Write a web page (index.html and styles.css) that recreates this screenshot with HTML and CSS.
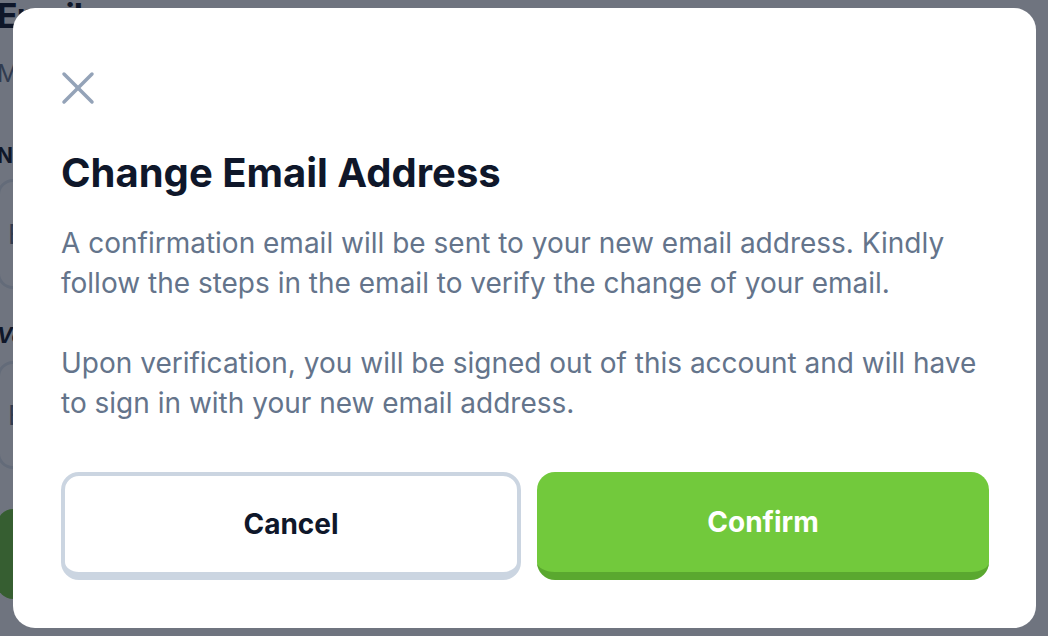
FILE: index.html
```html
<!DOCTYPE html>
<html lang="en">
<head>
<meta charset="utf-8">
<title>Change Email Address</title>
<link rel="stylesheet" href="styles.css">
</head>
<body>
<div class="page">
  <h1 class="page-title">Email</h1>
  <p class="page-sub">Manage your email address</p>
  <label class="page-label">New Email</label>
  <div class="page-input">Enter new email</div>
  <label class="page-label page-label-2">Verify Email</label>
  <div class="page-input page-input-2">Enter email again</div>
  <div class="page-button">Save</div>
</div>

<div class="overlay">
  <div class="modal" role="dialog" aria-labelledby="modal-title">
    <button class="close" aria-label="Close">
      <svg width="34" height="34" viewBox="0 0 34 34" fill="none" stroke="#94a3b8" stroke-width="3.5" stroke-linecap="round">
        <line x1="3" y1="3" x2="31" y2="31"/>
        <line x1="31" y1="3" x2="3" y2="31"/>
      </svg>
    </button>
    <h2 class="modal-title" id="modal-title">Change Email Address</h2>
    <div class="modal-body">
      <p>A confirmation email will be sent to your new email address. Kindly follow the steps in the email to verify the change of your email.</p>
      <p>Upon verification, you will be signed out of this account and will have to sign in with your new email address.</p>
    </div>
    <div class="actions">
      <button class="btn btn-cancel">Cancel</button>
      <button class="btn btn-confirm">Confirm</button>
    </div>
  </div>
</div>
</body>
</html>
```

FILE: styles.css
```css
* { box-sizing: border-box; }

html, body {
  margin: 0;
  padding: 0;
  height: 100%;
  overflow: hidden;
  background: #ffffff;
  font-family: "Inter", "Noto Sans", "Liberation Sans", sans-serif;
}

/* background page (under the overlay) */
.page {
  display: flex;
  flex-direction: column;
  margin-left: -3px;
  width: 700px;
}
.page-title {
  margin: -4px 0 0 0;
  font-size: 34px;
  font-weight: 700;
  line-height: 40px;
  letter-spacing: -1px;
  color: #0f172a;
}
.page-sub {
  margin: 22px 0 0 0;
  font-size: 24px;
  line-height: 32px;
  color: #64748b;
}
.page-label {
  margin-top: 52px;
  font-size: 21px;
  font-weight: 700;
  line-height: 28px;
  color: #0f172a;
}
.page-label-2 {
  margin-top: 33px;
  font-style: italic;
}
.page-input {
  margin-top: 9px;
  height: 110px;
  border: 3px solid #e2e8f0;
  border-radius: 16px;
  padding: 0 8px;
  display: flex;
  align-items: center;
  font-size: 27px;
  color: #64748b;
}
.page-input-2 {
  margin-top: 11px;
  height: 108px;
}
.page-button {
  margin-top: 40px;
  height: 90px;
  border-radius: 16px;
  background: #72c93c;
  color: #fff;
  display: flex;
  align-items: center;
  justify-content: center;
  font-size: 24px;
  font-weight: 700;
}

/* overlay + modal */
.overlay {
  position: fixed;
  inset: 0;
  background: rgba(15, 23, 42, 0.6);
  display: flex;
  padding: 8px 12px 8px 13px;
}
.modal {
  flex: 1;
  background: #ffffff;
  border-radius: 22px;
  padding: 63px 47px 48px 48px;
  display: flex;
  flex-direction: column;
}
.close {
  align-self: flex-start;
  background: none;
  border: 0;
  padding: 0;
  margin: 0;
  width: 34px;
  height: 34px;
  cursor: pointer;
  display: block;
}
.close svg { display: block; }

.modal-title {
  margin: 44px 0 0 0;
  font-size: 40px;
  font-weight: 700;
  line-height: 48px;
  color: #0f172a;
}
.modal-body {
  margin-top: 26px;
}
.modal-body p {
  margin: 0;
  font-size: 28px;
  line-height: 40px;
  color: #64748b;
}
.modal-body p + p { margin-top: 40px; }

.actions {
  margin-top: 49px;
  display: flex;
  gap: 16px;
}
.btn {
  flex: 1;
  height: 108px;
  border-radius: 18px;
  font-family: inherit;
  font-size: 28px;
  font-weight: 700;
  cursor: pointer;
  padding: 0;
}
.btn-cancel {
  background: #ffffff;
  color: #0f172a;
  border: 4px solid #cbd5e1;
  border-bottom-width: 8px;
}
.btn-confirm {
  background: #72c93c;
  color: #ffffff;
  border: 0;
  border-bottom: 8px solid #5aa82f;
}
```
